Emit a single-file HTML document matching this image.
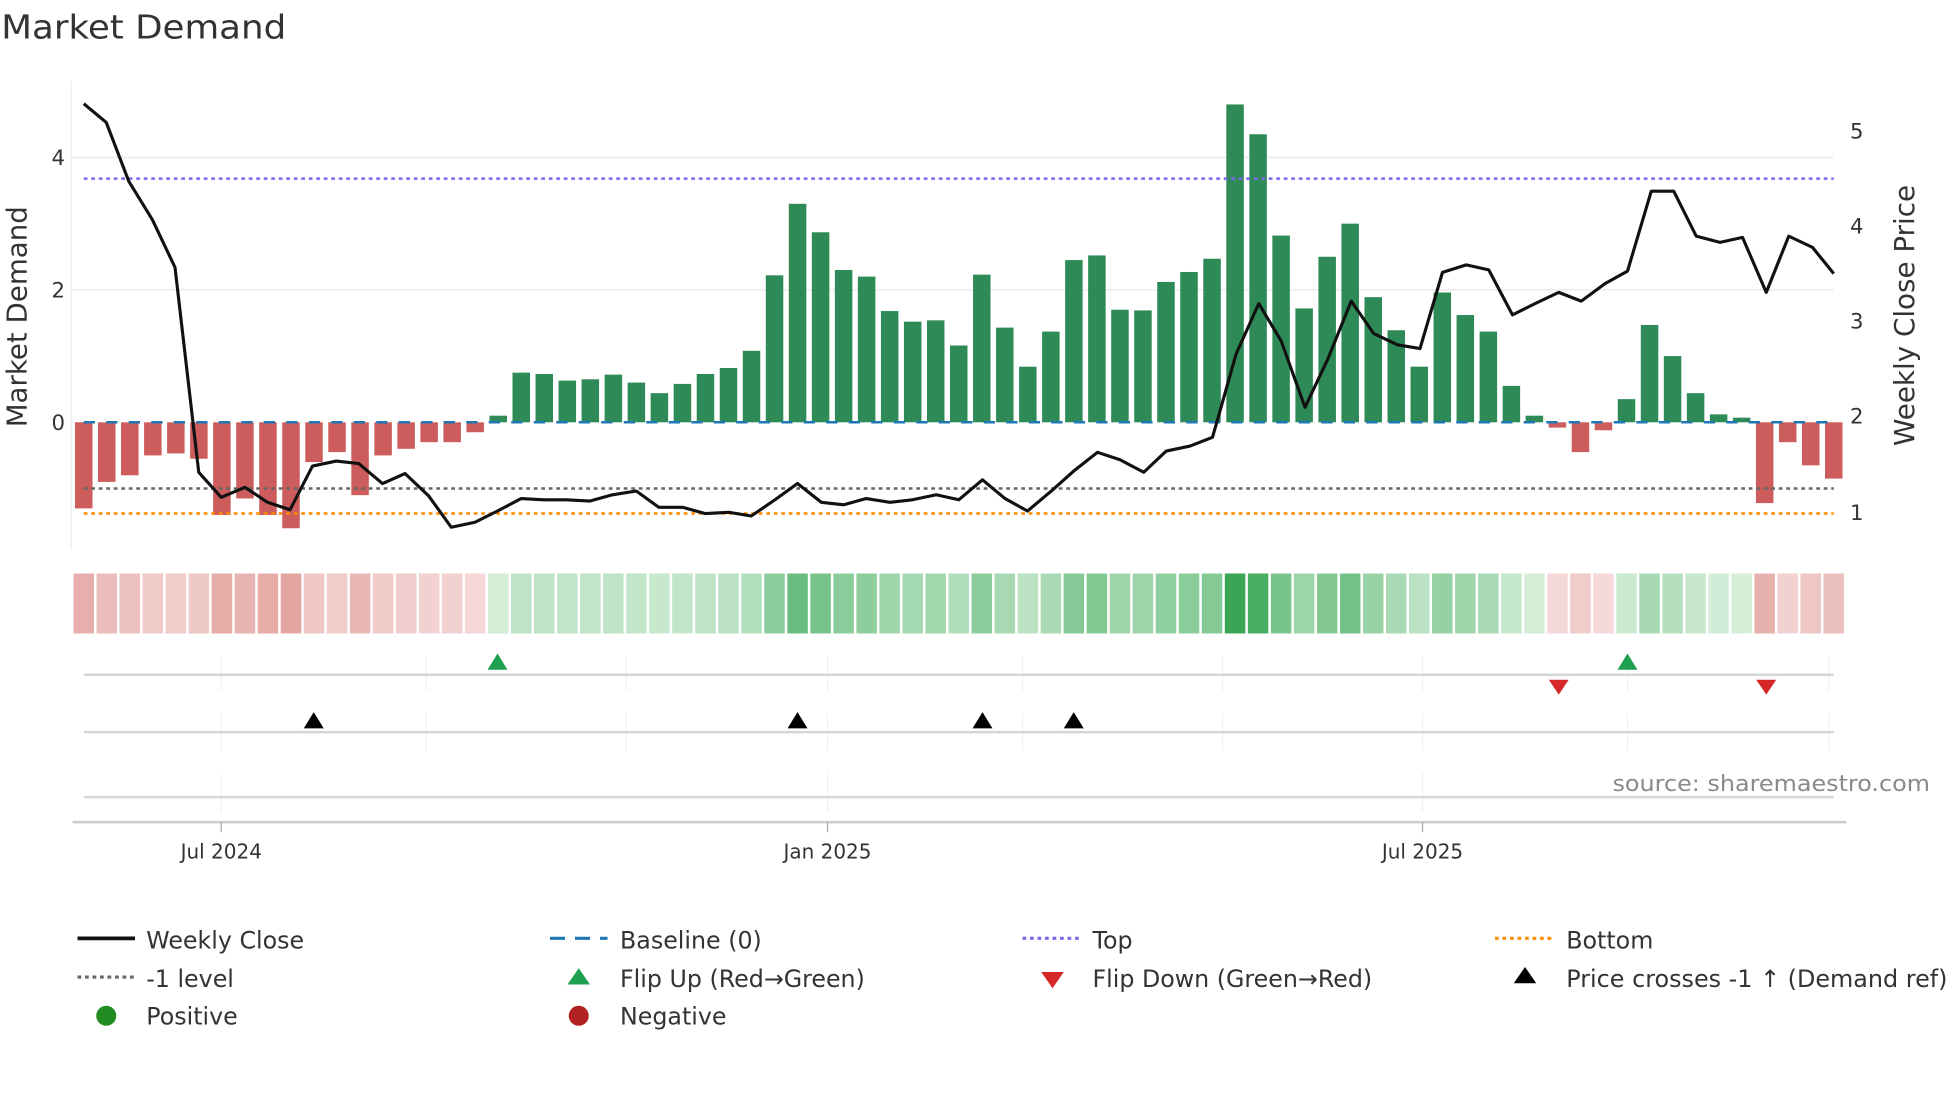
<!DOCTYPE html>
<html><head><meta charset="utf-8"><style>
html,body{margin:0;padding:0;background:#fff;width:1960px;height:1102px;overflow:hidden}
svg{display:block}
text{font-family:"DejaVu Sans","Liberation Sans",sans-serif;fill:#333}
</style></head><body>
<svg id="s" width="1960" height="1102" viewBox="0 0 1568 882" preserveAspectRatio="none" xmlns="http://www.w3.org/2000/svg">
<text x="1" y="31" font-size="26" textLength="228" lengthAdjust="spacingAndGlyphs">Market Demand</text>
<line x1="57" y1="126" x2="1467" y2="126" stroke="#eee" stroke-width="1.5"/>
<line x1="57" y1="232" x2="1467" y2="232" stroke="#eee" stroke-width="1.5"/>
<line x1="57" y1="65" x2="57" y2="440" stroke="#eee" stroke-width="1"/>
<text x="52" y="132" font-size="17" text-anchor="end">4</text>
<text x="52" y="238" font-size="17" text-anchor="end">2</text>
<text x="52" y="344" font-size="17" text-anchor="end">0</text>
<text x="1480" y="111" font-size="17">5</text>
<text x="1480" y="187" font-size="17">4</text>
<text x="1480" y="263" font-size="17">3</text>
<text x="1480" y="339" font-size="17">2</text>
<text x="1480" y="416" font-size="17">1</text>
<text transform="translate(21,342) rotate(-90)" font-size="22" textLength="177" lengthAdjust="spacingAndGlyphs">Market Demand</text>
<text transform="translate(1531,357) rotate(-90)" font-size="22" textLength="209" lengthAdjust="spacingAndGlyphs">Weekly Close Price</text>
<g id="bars"></g>
<line x1="67" y1="338" x2="1467" y2="338" stroke="#1f77b4" stroke-width="2" stroke-dasharray="9,9"/>
<line x1="67" y1="143" x2="1467" y2="143" stroke="#7b68ee" stroke-width="2" stroke-dasharray="3,3"/>
<line x1="67" y1="391" x2="1467" y2="391" stroke="#666" stroke-width="2" stroke-dasharray="3,3"/>
<line x1="67" y1="411" x2="1467" y2="411" stroke="#ff8c00" stroke-width="2" stroke-dasharray="3,3"/>
<polyline fill="none" stroke="#111" stroke-width="2.5" stroke-linejoin="round" points="67,83 85,98 103,145 122,176 140,214 159,378 177,398 196,390 214,402 232,408 250,373 269,369 287,371 306,387 324,379 343,397 361,422 380,418 398,409 417,399 435,400 453,400 472,401 490,396 509,393 527,406 546,406 564,411 583,410 601,413 620,400 638,387 657,402 675,404 693,399 712,402 730,400 749,396 767,400 786,384 804,399 822,409 841,393 859,377 878,362 896,368 915,378 933,361 952,357 970,350 989,283 1007,243 1025,273 1044,326 1062,288 1081,241 1099,267 1118,276 1136,279 1154,218 1173,212 1191,216 1210,252 1228,243 1247,234 1265,241 1284,227 1302,217 1321,153 1339,153 1357,189 1376,194 1394,190 1413,234 1431,189 1450,198 1467,219"/>
<g id="heat"></g>
<g stroke="#eef0f2" stroke-width="1">
<line x1="177" y1="525" x2="177" y2="553"/><line x1="341" y1="525" x2="341" y2="553"/><line x1="501" y1="525" x2="501" y2="553"/><line x1="662" y1="525" x2="662" y2="553"/><line x1="818" y1="525" x2="818" y2="553"/><line x1="978" y1="525" x2="978" y2="553"/><line x1="1138" y1="525" x2="1138" y2="553"/><line x1="1302" y1="525" x2="1302" y2="553"/><line x1="1463" y1="525" x2="1463" y2="553"/>
<line x1="177" y1="571" x2="177" y2="601"/><line x1="341" y1="571" x2="341" y2="601"/><line x1="501" y1="571" x2="501" y2="601"/><line x1="662" y1="571" x2="662" y2="601"/><line x1="818" y1="571" x2="818" y2="601"/><line x1="978" y1="571" x2="978" y2="601"/><line x1="1138" y1="571" x2="1138" y2="601"/><line x1="1302" y1="571" x2="1302" y2="601"/><line x1="1463" y1="571" x2="1463" y2="601"/>
<line x1="177" y1="619" x2="177" y2="650"/><line x1="662" y1="619" x2="662" y2="650"/><line x1="1138" y1="619" x2="1138" y2="650"/>
</g>
<line x1="67" y1="540" x2="1467" y2="540" stroke="#d6d6d6" stroke-width="2"/>
<line x1="67" y1="586" x2="1467" y2="586" stroke="#d6d6d6" stroke-width="2"/>
<line x1="67" y1="638" x2="1467" y2="638" stroke="#d6d6d6" stroke-width="2"/>
<polygon points="398,523 390,536 406,536" fill="#1fa050"/>
<polygon points="1302,523 1294,536 1310,536" fill="#1fa050"/>
<polygon points="1247,556 1239,544 1255,544" fill="#d62728"/>
<polygon points="1413,556 1405,544 1421,544" fill="#d62728"/>
<polygon points="251,570 243,583 259,583" fill="#000"/>
<polygon points="638,570 630,583 646,583" fill="#000"/>
<polygon points="786,570 778,583 794,583" fill="#000"/>
<polygon points="859,570 851,583 867,583" fill="#000"/>
<text x="1544" y="633" font-size="18" text-anchor="end" style="fill:#8a8a8a" textLength="254" lengthAdjust="spacingAndGlyphs">source: sharemaestro.com</text>
<line x1="58" y1="658" x2="1477" y2="658" stroke="#ccc" stroke-width="2"/>
<line x1="177" y1="658" x2="177" y2="666" stroke="#aaa"/>
<line x1="662" y1="658" x2="662" y2="666" stroke="#aaa"/>
<line x1="1138" y1="658" x2="1138" y2="666" stroke="#aaa"/>
<text x="177" y="687" font-size="16" text-anchor="middle">Jul 2024</text>
<text x="662" y="687" font-size="16" text-anchor="middle">Jan 2025</text>
<text x="1138" y="687" font-size="16" text-anchor="middle">Jul 2025</text>
<line x1="62" y1="751" x2="108" y2="751" stroke="#111" stroke-width="3"/>
<text x="117" y="759" font-size="19">Weekly Close</text>
<line x1="440" y1="751" x2="486" y2="751" stroke="#1f77b4" stroke-width="2.5" stroke-dasharray="12,8"/>
<text x="496" y="759" font-size="19">Baseline (0)</text>
<line x1="818" y1="751" x2="864" y2="751" stroke="#7b68ee" stroke-width="2.5" stroke-dasharray="3,3"/>
<text x="874" y="759" font-size="19">Top</text>
<line x1="1196" y1="751" x2="1242" y2="751" stroke="#ff8c00" stroke-width="2.5" stroke-dasharray="3,3"/>
<text x="1253" y="759" font-size="19">Bottom</text>
<line x1="62" y1="782" x2="108" y2="782" stroke="#666" stroke-width="2.5" stroke-dasharray="3,3"/>
<text x="117" y="790" font-size="19">-1 level</text>
<polygon points="463,775 454,788 472,788" fill="#1fa050"/>
<text x="496" y="790" font-size="19">Flip Up (Red→Green)</text>
<polygon points="842,791 833,778 851,778" fill="#d62728"/>
<text x="874" y="790" font-size="19">Flip Down (Green→Red)</text>
<polygon points="1220,774 1211,787 1229,787" fill="#000"/>
<text x="1253" y="790" font-size="19" textLength="305" lengthAdjust="spacingAndGlyphs">Price crosses -1 ↑ (Demand ref)</text>
<circle cx="85" cy="813" r="8" fill="#228b22"/>
<text x="117" y="820" font-size="19">Positive</text>
<circle cx="463" cy="813" r="8" fill="#b22222"/>
<text x="496" y="820" font-size="19">Negative</text>
</svg>
<script>
(function(){
var v=[-1.3,-0.9,-0.8,-0.5,-0.47,-0.55,-1.4,-1.15,-1.4,-1.6,-0.6,-0.45,-1.1,-0.5,-0.4,-0.3,-0.3,-0.15,
0.1,0.75,0.73,0.63,0.65,0.72,0.6,0.44,0.58,0.73,0.82,1.08,2.22,3.3,2.87,2.3,2.2,1.68,1.52,1.54,1.16,2.23,1.43,0.84,1.37,2.45,2.52,1.7,1.69,2.12,2.27,2.47,4.8,4.35,2.82,1.72,2.5,3.0,1.89,1.39,0.84,1.96,1.62,1.37,0.55,0.1,
-0.08,-0.45,-0.12,0.35,1.47,1.0,0.44,0.12,0.07,-1.22,-0.3,-0.65,-0.85];
var ns="http://www.w3.org/2000/svg",b=document.getElementById("bars"),h=document.getElementById("heat");
function r(g,x,y,w,hh,f){var e=document.createElementNS(ns,"rect");e.setAttribute("x",x);e.setAttribute("y",y);e.setAttribute("width",w);e.setAttribute("height",hh);e.setAttribute("fill",f);g.appendChild(e);}
var n=v.length,step=(1467-67)/(n-1);
for(var i=0;i<n;i++){
 var cx=67+i*step,val=v[i],y0=338,y1=338-val*53;
 r(b,cx-7,Math.min(y0,y1),14,Math.max(1,Math.abs(y1-y0)),val>=0?"#2e8b57":"#cd5c5c");
 var c,t;
 if(val>=0){t=Math.min(1,val/4.8);c="rgb("+Math.round(214-158*t)+","+Math.round(239-73*t)+","+Math.round(218-134*t)+")";}
 else{t=Math.min(1,-val/1.6);c="rgb("+Math.round(246-20*t)+","+Math.round(220-55*t)+","+Math.round(220-60*t)+")";}
 r(h,cx-8.2,459,16.4,48,c);
}
})();
</script>
</body></html>
